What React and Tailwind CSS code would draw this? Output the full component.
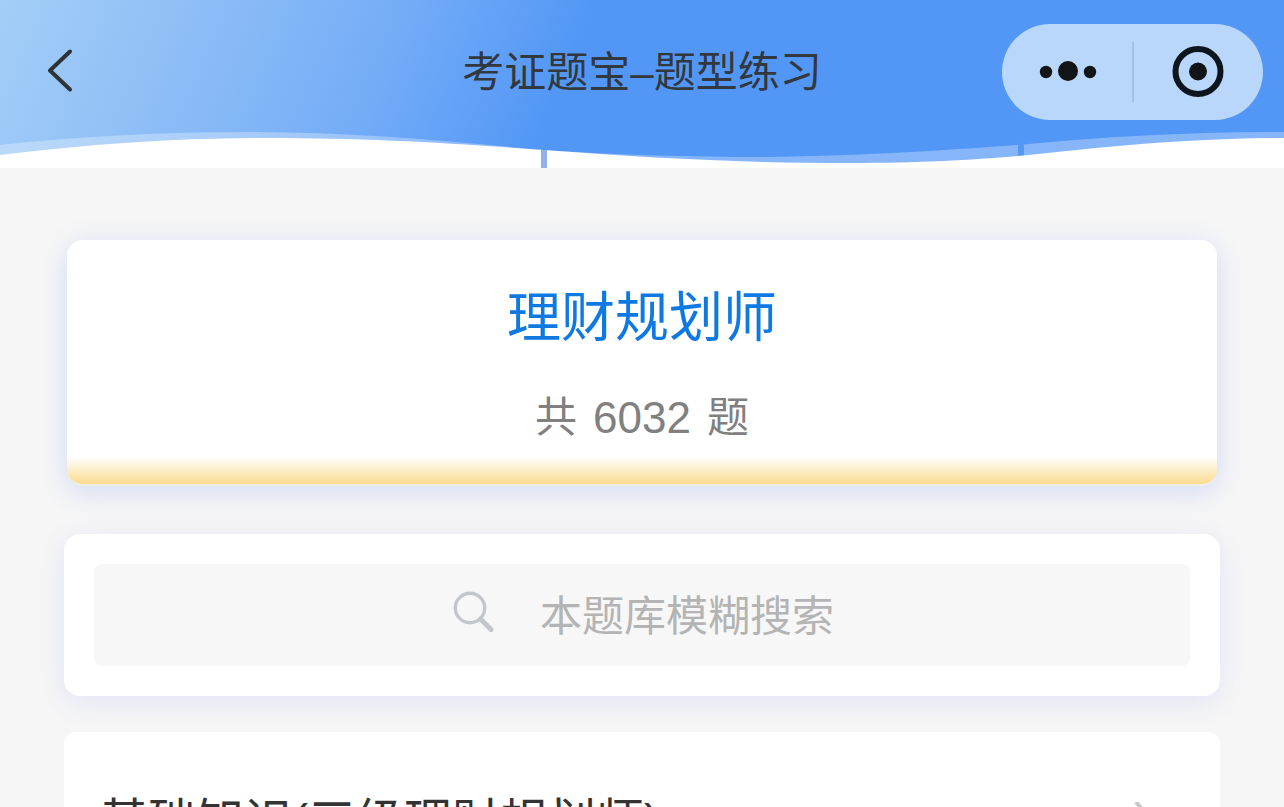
function BackIcon() {
  return (
    <svg className="h-12 w-8" viewBox="0 0 32 48" fill="none" stroke="#2f3338" strokeWidth="4" strokeLinecap="round" strokeLinejoin="round" aria-hidden="true">
      <path d="M26 3.5 L6 22.5 L26 41.5" />
    </svg>
  );
}

function Waves() {
  return (
    <svg className="absolute inset-0 h-full w-full" viewBox="0 0 1284 168" preserveAspectRatio="none" aria-hidden="true">
      <path
        d="M0 145 C80 136 165 132 250 132 C350 132 450 141 543 150 C620 155 690 157 760 157 C870 156 960 149 1018 145 C1100 137 1190 132 1284 132 V168 H0 Z"
        fill="#ffffff"
        fillOpacity="0.3"
      />
      <path d="M1018 143 H1024 V168 H1018 Z" fill="#5599f0" />
      <path
        d="M0 155 C90 144 175 138 265 138 C370 138 450 143 543 150 C650 158 740 163 850 163 C920 163 970 160 1018 156 C1060 152 1090 148 1130 145 C1180 141 1230 138 1284 138 V168 H0 Z"
        fill="#ffffff"
      />
      <path d="M541 150 H547 V168 H541 Z" fill="#8fb3e8" />
    </svg>
  );
}

function Header() {
  return (
    <header className="relative h-[168px] shrink-0 bg-[linear-gradient(113deg,#a3cef7_0%,#88b9f6_19%,#72abf7_31%,#5297f6_44%)]">
      <Waves />
      <div className="relative grid h-36 grid-cols-[1fr_auto_1fr] items-center px-[21px]">
        <button type="button" aria-label="返回" className="justify-self-start pl-[23px]">
          <BackIcon />
        </button>
        <h1 className="pt-0.5 text-[42px] leading-[60px] text-[#33383f]">考证题宝–题型练习</h1>
        <div className="flex h-24 w-[261px] items-center justify-self-end rounded-full bg-[#b9d7fb]">
          <button type="button" aria-label="更多" className="flex h-full flex-1 items-center justify-center">
            <svg className="h-6 w-16" viewBox="0 0 64 24" fill="#111518" aria-hidden="true">
              <circle cx="11" cy="12" r="6.2" />
              <circle cx="33" cy="11" r="10" />
              <circle cx="55" cy="12" r="6.2" />
            </svg>
          </button>
          <span className="h-[60px] w-0.5 bg-[#a2c1e8]" />
          <button type="button" aria-label="关闭" className="flex h-full flex-1 items-center justify-center">
            <svg className="h-[52px] w-[52px]" viewBox="0 0 52 52" aria-hidden="true">
              <circle cx="26" cy="25.5" r="22.5" fill="none" stroke="#0d151d" strokeWidth="6" />
              <circle cx="26" cy="25.5" r="9" fill="#111518" />
            </svg>
          </button>
        </div>
      </div>
    </header>
  );
}

export default function App() {
  return (
    <div className="flex h-screen flex-col overflow-hidden bg-[#f6f6f6] font-['Liberation_Sans','Noto_Sans_CJK_SC',sans-serif]">
      <Header />
      <main className="flex flex-col px-16 pt-[72px]">
        <section className="mx-[3px] flex h-[246px] flex-col items-center rounded-2xl border-b-2 border-[#f1eee8] bg-[linear-gradient(to_bottom,#ffffff_0%,#ffffff_89%,#fdeecb_94%,#fbdc8f_100%)] pt-10 shadow-[0_6px_28px_rgba(70,110,240,0.2)]">
          <h2 className="text-[54px] leading-[76px] text-[#0f79e3]">理财规划师</h2>
          <p className="mt-8 flex items-center gap-4 text-[42px] leading-[60px] text-[#808080]">
            <span>共</span>
            <span className="text-[44px]">6032</span>
            <span>题</span>
          </p>
        </section>

        <section className="mt-12 rounded-2xl bg-white p-[30px] shadow-[0_6px_28px_rgba(80,100,240,0.12)]">
          <label className="flex h-[102px] items-center justify-center gap-11 rounded-lg bg-[#f7f7f7]">
            <svg className="h-12 w-11" viewBox="0 0 44 48" fill="none" stroke="#c3c6cb" aria-hidden="true">
              <circle cx="20" cy="17" r="14.7" strokeWidth="3.4" />
              <path d="M30.5 28 L41 38.5" strokeWidth="5" strokeLinecap="round" />
            </svg>
            <input
              type="text"
              aria-label="本题库模糊搜索"
              placeholder="本题库模糊搜索"
              className="w-[296px] bg-transparent pt-1 pl-0.5 text-[42px] leading-[60px] text-[#333333] outline-none placeholder:text-[#b4b4b4]"
            />
          </label>
        </section>

        <a href="#basic" className="mt-9 flex items-center justify-between rounded-xl bg-white py-14 pr-[66px] pl-9">
          <span className="text-[48px] leading-[68px] text-[#333333]">基础知识(三级理财规划师)</span>
          <svg className="h-10 w-5" viewBox="0 0 20 40" fill="none" stroke="#c8c8cc" strokeWidth="4" aria-hidden="true">
            <path d="M2 0 L17 18 L2 36" />
          </svg>
        </a>
      </main>
    </div>
  );
}
